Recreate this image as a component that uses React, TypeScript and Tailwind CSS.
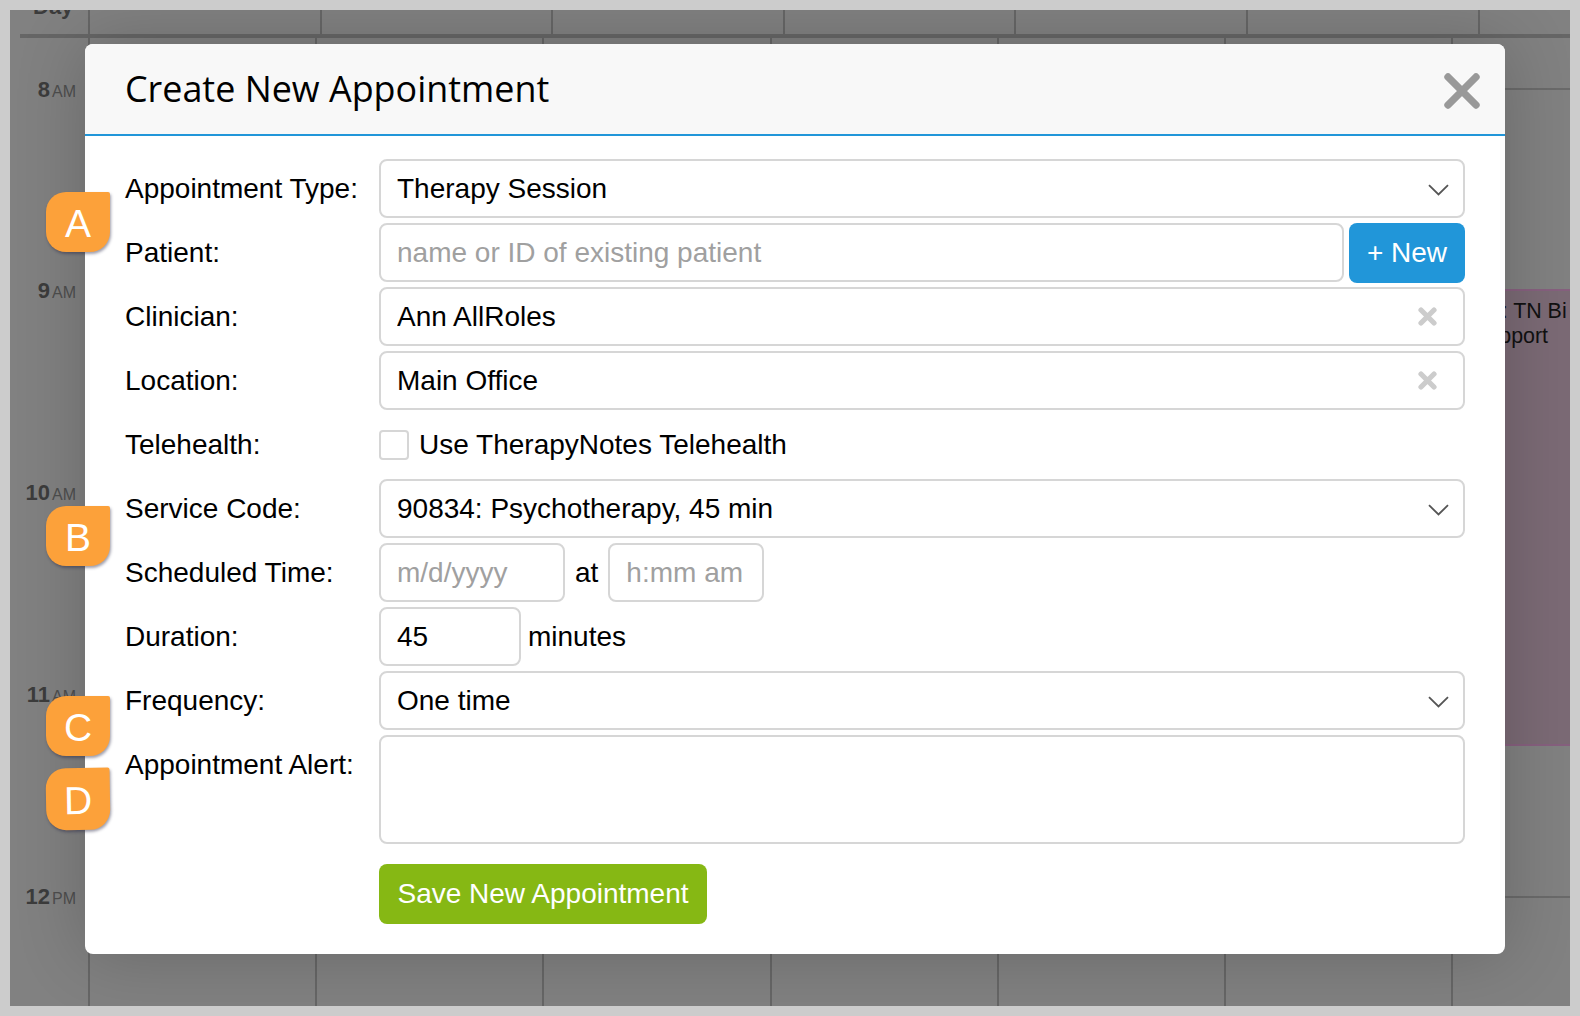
const sans = "font-['Liberation_Sans',Arial,sans-serif]";

function Chevron() {
  return (
    <svg className="pointer-events-none absolute right-[16px] top-[25px] h-[12px] w-[21px]" viewBox="0 0 21 12" fill="none">
      <path d="M1 1.2 L10.5 10.4 L20 1.2" stroke="#555555" strokeWidth="1.8" />
    </svg>
  );
}

function ClearX() {
  return (
    <svg className="pointer-events-none absolute right-[28px] top-[20px] h-[19px] w-[19px]" viewBox="0 0 19 19" fill="none">
      <path d="M3 3 L16 16 M16 3 L3 16" stroke="#cccccc" strokeWidth="5.2" strokeLinecap="round" />
    </svg>
  );
}

function Label({ children }: { children: React.ReactNode }) {
  return <div className="flex h-[59px] items-center whitespace-nowrap">{children}</div>;
}

const field = "h-[59px] rounded-[8px] border-2 border-[#d6d6d6] bg-white px-[16px] text-[28px] text-black outline-none placeholder:text-[#a0a0a0]";

function SelectField({ value }: { value: string }) {
  return (
    <div className="relative">
      <select defaultValue={value} className={`${field} w-full appearance-none`}>
        <option>{value}</option>
      </select>
      <Chevron />
    </div>
  );
}

function ClearField({ value }: { value: string }) {
  return (
    <div className="relative">
      <input readOnly value={value} className={`${field} w-full`} />
      <ClearX />
    </div>
  );
}

function Badge({ letter, className }: { letter: string; className: string }) {
  return (
    <div className={`absolute left-[36px] flex w-[64px] items-center justify-center rounded-[20px] rounded-tr-[2px] bg-[#fca13a] pt-[2px] text-[39px] leading-none text-white shadow-[1px_2px_3px_rgba(40,40,70,0.45)] ${className}`}>
      {letter}
    </div>
  );
}

function TimeLabel({ hour, unit }: { hour: string; unit: string }) {
  return (
    <div className="flex h-[201.8px] items-baseline justify-end gap-[2px] pr-[12px] leading-[24px]">
      <span className="text-[22px] font-bold text-[#3c3c3c]">{hour}</span>
      <span className="text-[16px] text-[#4e4e4e]">{unit}</span>
    </div>
  );
}

const topCols = [0, 1, 2, 3, 4, 5, 6];
const dayCols = [0, 1, 2, 3, 4, 5, 6];
const hourRows = [0, 1, 2, 3];

export default function App() {
  return (
    <div className={`relative h-[1016px] w-[1580px] overflow-hidden border-[10px] border-[#cccccc] bg-[#818181] ${sans} text-black`}>
      {/* calendar behind the dialog */}
      <div className="flex h-full flex-col pl-[10px]">
        <div className="flex h-[24px] shrink-0 overflow-hidden">
          <div className="w-[68px] shrink-0 overflow-hidden pl-[13px]">
            <div className="-mt-[16px] text-[22px] font-bold leading-[26px] text-[#3c3c3c]">Day</div>
          </div>
          {topCols.map((c) => (
            <div key={c} className="w-[231.6px] shrink-0 border-l-2 border-[#666666]" />
          ))}
        </div>
        <div className="h-[4px] shrink-0 bg-[#666666]" />
        <div className="flex min-h-0 flex-1 overflow-hidden">
          <div className="w-[68px] shrink-0 pt-[39.5px]">
            <TimeLabel hour="8" unit="AM" />
            <TimeLabel hour="9" unit="AM" />
            <TimeLabel hour="10" unit="AM" />
            <TimeLabel hour="11" unit="AM" />
            <TimeLabel hour="12" unit="PM" />
          </div>
          {dayCols.map((c) => (
            <div key={c} className="relative w-[227.2px] shrink-0 border-l-2 border-[#666666]">
              <div className="h-[52px] border-b-2 border-[#6a6a6a]" />
              {hourRows.map((r) => (
                <div key={r} className="h-[202.1px] border-b-2 border-[#6a6a6a]" />
              ))}
              {c === 6 && (
                <div className="absolute left-0 top-[251px] h-[457px] w-[140px] overflow-hidden border-y-2 border-[#86607e] bg-[#7b6a75] pl-[20px] pt-[8px] text-[21.4px] leading-[25px] text-[#111111]">
                  <div className="whitespace-nowrap">Ins: TN Bi</div>
                  <div className="whitespace-nowrap">Support</div>
                </div>
              )}
            </div>
          ))}
        </div>
      </div>

      {/* dialog */}
      <div className="absolute left-[75px] top-[34px] w-[1420px] rounded-[8px] bg-white shadow-[0_0_70px_rgba(0,0,0,0.2)]">
        <div className="flex h-[92px] items-center justify-between rounded-t-[8px] border-b-2 border-[#2196d9] bg-[#f8f8f8] pl-[40px] pr-[25px]">
          <h1 className="font-['Open_Sans',sans-serif] text-[35.9px] font-normal leading-none">Create New Appointment</h1>
          <svg className="mt-[4px] h-[36px] w-[36px]" viewBox="0 0 36 36" fill="none">
            <path d="M4 4 L32 32 M32 4 L4 32" stroke="#999999" strokeWidth="7.4" strokeLinecap="round" />
          </svg>
        </div>
        <div className="grid grid-cols-[254px_1fr] gap-y-[5px] px-[40px] pb-[30px] pt-[23px] text-[28px]">
          <Label>Appointment Type:</Label>
          <SelectField value="Therapy Session" />

          <Label>Patient:</Label>
          <div className="flex h-[59px] gap-[5px]">
            <input placeholder="name or ID of existing patient" className={`${field} min-w-0 flex-1`} />
            <button className="h-[60px] w-[116px] shrink-0 rounded-[8px] bg-[#2196d9] text-[28px] text-white">+ New</button>
          </div>

          <Label>Clinician:</Label>
          <ClearField value="Ann AllRoles" />

          <Label>Location:</Label>
          <ClearField value="Main Office" />

          <Label>Telehealth:</Label>
          <label className="flex h-[59px] items-center gap-[10px] pt-[1px]">
            <span className="h-[30px] w-[30px] rounded-[4px] border-2 border-[#d6d6d6] bg-white" />
            <span>Use TherapyNotes Telehealth</span>
          </label>

          <Label>Service Code:</Label>
          <SelectField value="90834: Psychotherapy, 45 min" />

          <Label>Scheduled Time:</Label>
          <div className="flex items-center">
            <input placeholder="m/d/yyyy" className={`${field} w-[186px]`} />
            <span className="mx-[10px]">at</span>
            <input placeholder="h:mm am" className={`${field} w-[156px]`} />
          </div>

          <Label>Duration:</Label>
          <div className="flex items-center gap-[7px]">
            <input readOnly value="45" className={`${field} w-[142px]`} />
            <span>minutes</span>
          </div>

          <Label>Frequency:</Label>
          <SelectField value="One time" />

          <Label>Appointment Alert:</Label>
          <textarea className={`${field} !h-[109px] w-full resize-none`} />

          <div />
          <div className="mt-[15px]">
            <button className="h-[60px] w-[328px] rounded-[8px] bg-[#86b814] text-[28px] text-white">Save New Appointment</button>
          </div>
        </div>
      </div>

      <Badge letter="A" className="top-[182px] h-[60px]" />
      <Badge letter="B" className="top-[496px] h-[60px]" />
      <Badge letter="C" className="top-[686px] h-[60px]" />
      <Badge letter="D" className="top-[758px] h-[62px] -rotate-1" />
    </div>
  );
}
